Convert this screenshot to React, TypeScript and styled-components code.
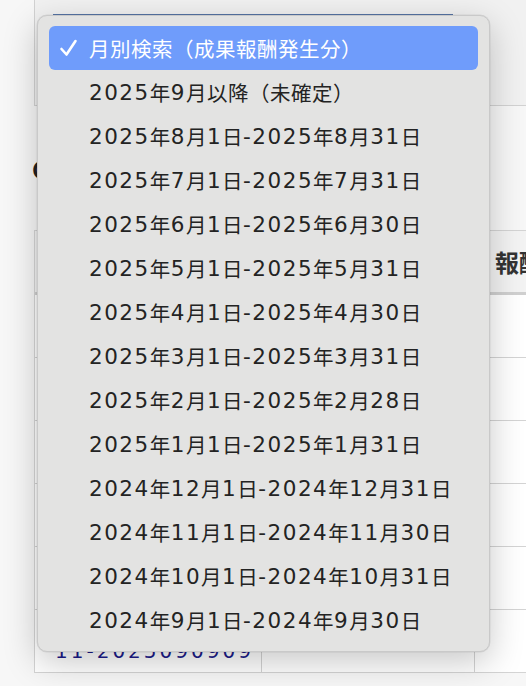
import React from "react";
import styled, { createGlobalStyle } from "styled-components";

const Global = createGlobalStyle`
  html, body { margin: 0; padding: 0; }
  body {
    background: #f7f7f7;
    font-family: "Noto Sans CJK JP", "Noto Sans", sans-serif;
    width: 526px;
    height: 686px;
    overflow: hidden;
  }
`;

const Page = styled.div`
  position: relative;
  width: 526px;
  height: 686px;
  overflow: hidden;
`;

const FilterPanel = styled.div`
  margin-left: 34px;
  height: 106px;
  box-sizing: border-box;
  border-left: 1px solid #d2d2d2;
  border-bottom: 1px solid #d2d2d2;
  background: #f1f1f1;
  padding: 14px 0 0 18px;
`;

const SelectBox = styled.div`
  width: 400px;
  height: 40px;
  box-sizing: border-box;
  border-top: 2px solid #5a78aa;
  background: #fff;
`;

const HeadingArea = styled.div`
  height: 124px;
  box-sizing: border-box;
  padding: 48px 0 0 32px;
`;

const Heading = styled.h2`
  margin: 0;
  font-size: 24px;
  font-weight: 700;
  color: #222;
  line-height: 30px;
`;

const Table = styled.div`
  margin-left: 34px;
  display: grid;
  grid-template-columns: 227px 213px 120px;
  border-left: 1px solid #d4d4d4;
`;

const HeadCell = styled.div`
  height: 61px;
  border-top: 1px solid #d4d4d4;
  border-bottom: 3px solid #d0d0d0;
  border-right: 1px solid #d4d4d4;
  background: #f3f3f3;
  display: flex;
  align-items: center;
  padding-left: 20px;
  font-size: 24px;
  font-weight: 700;
  color: #333;
`;

const Cell = styled.div`
  height: 63px;
  box-sizing: border-box;
  border-bottom: 1px solid #d4d4d4;
  border-right: 1px solid #d4d4d4;
  background: #fff;
  display: flex;
  align-items: center;
  padding: 20px 0 0 20px;
`;

const LinkText = styled.span`
  color: #1c1c8a;
  font-family: "DejaVu Sans", sans-serif;
  font-size: 20px;
  letter-spacing: 3px;
`;

const Menu = styled.ul`
  position: absolute;
  left: 37px;
  top: 15px;
  width: 453px;
  box-sizing: border-box;
  margin: 0;
  padding: 10px 11px 9px;
  list-style: none;
  background: #e3e3e2;
  border: 1px solid #c9c9c9;
  border-radius: 10px;
  box-shadow: 0 10px 34px rgba(0, 0, 0, 0.22), 0 0 0 0.5px rgba(0, 0, 0, 0.08);
`;

const Item = styled.li<{ $selected?: boolean }>`
  position: relative;
  height: 44px;
  display: flex;
  align-items: center;
  padding-left: 40px;
  border-radius: 6px;
  font-size: 20.5px;
  letter-spacing: 0.5px;
  color: ${(p) => (p.$selected ? "#ffffff" : "#232323")};
  background: ${(p) => (p.$selected ? "#6f9cfb" : "transparent")};
  white-space: nowrap;
`;

const Num = styled.span`
  font-family: "DejaVu Sans", sans-serif;
  font-size: 21.5px;
  letter-spacing: 1.5px;
`;

const Check = styled.svg`
  position: absolute;
  left: 10px;
  top: 12px;
  width: 19px;
  height: 19px;
`;

const options = [
  "月別検索（成果報酬発生分）",
  "2025年9月以降（未確定）",
  "2025年8月1日-2025年8月31日",
  "2025年7月1日-2025年7月31日",
  "2025年6月1日-2025年6月30日",
  "2025年5月1日-2025年5月31日",
  "2025年4月1日-2025年4月30日",
  "2025年3月1日-2025年3月31日",
  "2025年2月1日-2025年2月28日",
  "2025年1月1日-2025年1月31日",
  "2024年12月1日-2024年12月31日",
  "2024年11月1日-2024年11月30日",
  "2024年10月1日-2024年10月31日",
  "2024年9月1日-2024年9月30日",
];

function Label({ text }: { text: string }) {
  const parts = text.split(/([0-9-]+)/).filter((s) => s.length > 0);
  return (
    <>
      {parts.map((p, i) =>
        /^[0-9-]+$/.test(p) ? (
          <Num key={i}>{p}</Num>
        ) : (
          <React.Fragment key={i}>{p}</React.Fragment>
        )
      )}
    </>
  );
}

export default function App() {
  const rows = [0, 1, 2, 3, 4, 5];
  return (
    <Page>
      <Global />
      <FilterPanel>
        <SelectBox />
      </FilterPanel>
      <HeadingArea>
        <Heading>CSV出力</Heading>
      </HeadingArea>
      <Table>
        <HeadCell>成果ID</HeadCell>
        <HeadCell>発生日時</HeadCell>
        <HeadCell>報酬</HeadCell>
        {rows.map((r) => (
          <React.Fragment key={r}>
            <Cell>{r === 5 ? <LinkText>11-2025090909</LinkText> : null}</Cell>
            <Cell />
            <Cell />
          </React.Fragment>
        ))}
      </Table>
      <Menu>
        {options.map((o, i) => (
          <Item key={o} $selected={i === 0}>
            {i === 0 && (
              <Check viewBox="0 0 19 19">
                <path d="M2.5 11 L7.5 16.5 L16.5 3" fill="none" stroke="#fff" strokeWidth="2.6" strokeLinecap="round" strokeLinejoin="round" />
              </Check>
            )}
            <Label text={o} />
          </Item>
        ))}
      </Menu>
    </Page>
  );
}
